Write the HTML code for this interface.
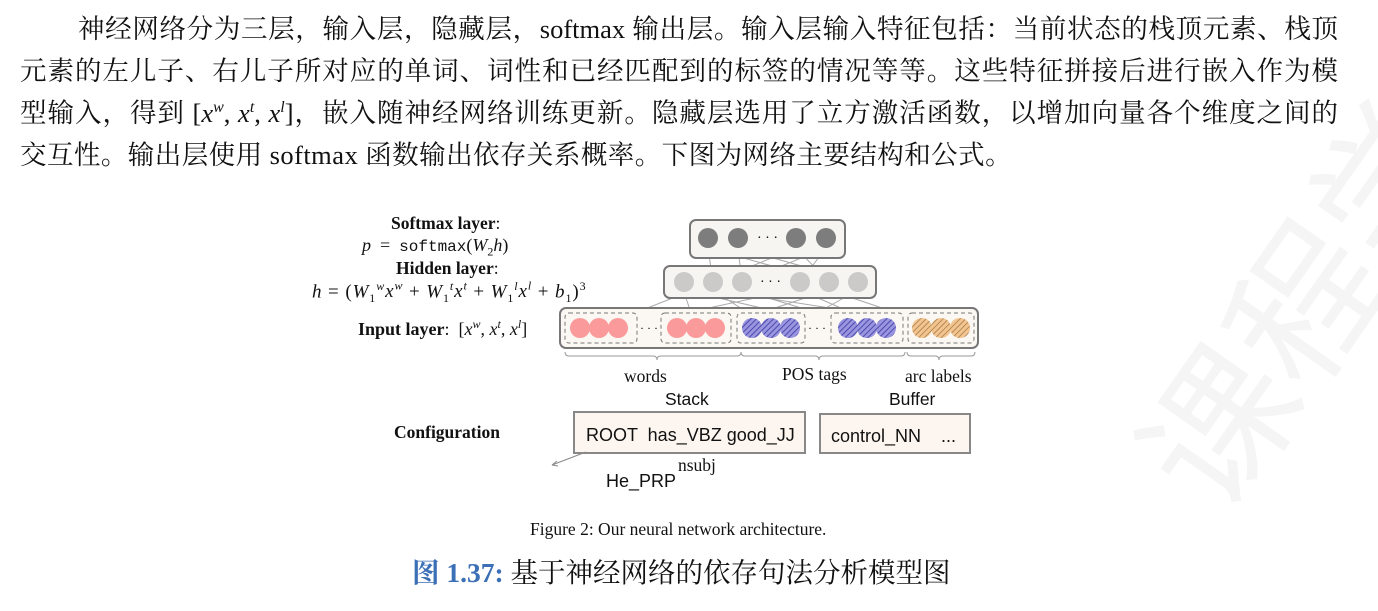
<!DOCTYPE html>
<html><head><meta charset="utf-8"><style>
body{margin:0;width:1378px;height:611px;background:#fff;position:relative;overflow:hidden;font-family:"Liberation Serif","Noto Serif CJK SC",serif;color:#111}
.l{position:absolute;font-size:26.5px;white-space:nowrap;text-align:justify;text-align-last:justify}
.a{position:absolute;white-space:nowrap}
.s{font-family:"Liberation Sans",sans-serif}
i{font-style:italic}
</style></head><body>
<div class="a" style="left:1080px;top:420px;font-size:150px;color:#f5f5f5;transform:rotate(-55deg);transform-origin:left top;font-family:'Noto Sans CJK SC',sans-serif">课程学习</div>
<div class="l" style="left:78px;top:7px;width:1260px">神经网络分为三层，输入层，隐藏层，softmax 输出层。输入层输入特征包括：当前状态的栈顶元素、栈顶</div>
<div class="l" style="left:20px;top:49px;width:1318px">元素的左儿子、右儿子所对应的单词、词性和已经匹配到的标签的情况等等。这些特征拼接后进行嵌入作为模</div>
<div class="l" style="left:20px;top:91px;width:1318px">型输入，得到 [<i>x<sup style="font-size:16px">w</sup></i>, <i>x<sup style="font-size:16px">t</sup></i>, <i>x<sup style="font-size:16px">l</sup></i>]，嵌入随神经网络训练更新。隐藏层选用了立方激活函数，以增加向量各个维度之间的</div>
<div class="a" style="left:20px;top:133px;font-size:26.5px;letter-spacing:0.45px">交互性。输出层使用 softmax 函数输出依存关系概率。下图为网络主要结构和公式。</div>

<div class="a" style="left:391px;top:213px;font-size:17.5px;font-weight:bold">Softmax layer<span style="font-weight:normal">:</span></div>
<div class="a" style="left:362px;top:235px;font-size:18px"><i>p</i> &nbsp;= &nbsp;<span style="font-family:'Liberation Mono',monospace;font-size:16px">softmax</span>(<i>W</i><sub style="font-size:12px">2</sub><i>h</i>)</div>
<div class="a" style="left:396px;top:258px;font-size:17.5px;font-weight:bold">Hidden layer<span style="font-weight:normal">:</span></div>
<div class="a" style="left:312px;top:279px;font-size:19px;letter-spacing:0.9px"><i>h</i> = (<i>W</i><sub style="font-size:12px">1</sub><sup style="font-size:12px"><i>w</i></sup><i>x<sup style="font-size:12px">w</sup></i> + <i>W</i><sub style="font-size:12px">1</sub><sup style="font-size:12px"><i>t</i></sup><i>x<sup style="font-size:12px">t</sup></i> + <i>W</i><sub style="font-size:12px">1</sub><sup style="font-size:12px"><i>l</i></sup><i>x<sup style="font-size:12px">l</sup></i> + <i>b</i><sub style="font-size:12px">1</sub>)<sup style="font-size:12px">3</sup></div>
<div class="a" style="left:358px;top:317px;font-size:18px"><b>Input layer</b>: &nbsp;[<i>x<sup style="font-size:12px">w</sup></i>, <i>x<sup style="font-size:12px">t</sup></i>, <i>x<sup style="font-size:12px">l</sup></i>]</div>

<svg class="a" style="left:0;top:0" width="1378" height="611">
<defs>
<pattern id="hb" width="4" height="4" patternUnits="userSpaceOnUse" patternTransform="rotate(45)"><rect width="4" height="4" fill="#9a95e0"/><line x1="0" y1="0" x2="0" y2="4" stroke="#333399" stroke-width="1.5"/></pattern>
<pattern id="ho" width="4" height="4" patternUnits="userSpaceOnUse" patternTransform="rotate(45)"><rect width="4" height="4" fill="#f3c48e"/><line x1="0" y1="0" x2="0" y2="4" stroke="#8a6a3a" stroke-width="1.2"/></pattern>
</defs>
<g stroke="#aaa" stroke-width="1" fill="none">
<path d="M713 282L708 248M742 282L738 248M829 282L796 248M800 282L826 248M713 282L796 248M829 282L708 248M742 282L826 248M858 282L738 248"/>
<path d="M597 328L713 282M616 328L829 282M696 328L684 292M715 328L829 290M771 328L713 290M790 328L858 290M867 328L742 290M886 328L800 290M941 328L829 290M960 328L713 290M848 328L684 290"/>
</g>
<rect x="690" y="220" width="155" height="38" rx="6" fill="#f7f5f2" stroke="#777" stroke-width="2"/>
<g fill="#7d7d7d"><circle cx="708" cy="238" r="10"/><circle cx="738" cy="238" r="10"/><circle cx="796" cy="238" r="10"/><circle cx="826" cy="238" r="10"/></g>
<text x="757" y="242" font-size="14">· · ·</text>
<rect x="664" y="266" width="212" height="32" rx="6" fill="#f7f5f2" stroke="#777" stroke-width="2"/>
<g fill="#cbcac8"><circle cx="684" cy="282" r="10"/><circle cx="713" cy="282" r="10"/><circle cx="742" cy="282" r="10"/><circle cx="800" cy="282" r="10"/><circle cx="829" cy="282" r="10"/><circle cx="858" cy="282" r="10"/></g>
<text x="760" y="286" font-size="14">· · ·</text>
<rect x="560" y="308" width="418" height="40" rx="6" fill="#fbf8f3" stroke="#777" stroke-width="2"/>
<g fill="none" stroke="#777" stroke-dasharray="4,3"><rect x="565" y="313" width="72" height="30" rx="4"/><rect x="661" y="313" width="70" height="30" rx="4"/><rect x="737" y="313" width="68" height="30" rx="4"/><rect x="831" y="313" width="72" height="30" rx="4"/><rect x="908" y="313" width="66" height="30" rx="4"/></g>
<g fill="#fb9a9a"><circle cx="580" cy="328" r="10"/><circle cx="599" cy="328" r="10"/><circle cx="618" cy="328" r="10"/><circle cx="677" cy="328" r="10"/><circle cx="696" cy="328" r="10"/><circle cx="715" cy="328" r="10"/></g>
<g fill="url(#hb)"><circle cx="752" cy="328" r="10"/><circle cx="771" cy="328" r="10"/><circle cx="790" cy="328" r="10"/><circle cx="848" cy="328" r="10"/><circle cx="867" cy="328" r="10"/><circle cx="886" cy="328" r="10"/></g>
<g fill="url(#ho)"><circle cx="922" cy="328" r="10"/><circle cx="941" cy="328" r="10"/><circle cx="960" cy="328" r="10"/></g>
<text x="640" y="332" font-size="12">· · ·</text><text x="808" y="332" font-size="12">· · ·</text>
<g fill="none" stroke="#999"><path d="M565 352q0 4 4 4h84q4 0 4 4q0-4 4-4h76q4 0 4-4"/><path d="M741 352q0 4 4 4h70q4 0 4 4q0-4 4-4h78q4 0 4-4"/><path d="M907 352q0 4 4 4h24q4 0 4 4q0-4 4-4h28q4 0 4-4"/></g>
<rect x="574" y="412" width="231" height="41" fill="#fdf6f0" stroke="#888" stroke-width="2"/>
<rect x="820" y="414" width="150" height="39" fill="#fdf6f0" stroke="#888" stroke-width="2"/>
<path d="M586 452L552 465" stroke="#888"/><path d="M552 465l5-4M552 465l6 1" stroke="#888"/>
</svg>
<div class="a" style="left:624px;top:366px;font-size:17.5px">words</div>
<div class="a" style="left:782px;top:364px;font-size:17.5px">POS tags</div>
<div class="a" style="left:905px;top:366px;font-size:17.5px">arc labels</div>
<div class="a s" style="left:665px;top:389px;font-size:17.5px">Stack</div>
<div class="a s" style="left:889px;top:389px;font-size:17.5px">Buffer</div>
<div class="a" style="left:394px;top:422px;font-size:17.5px;font-weight:bold">Configuration</div>
<div class="a s" style="left:586px;top:425px;font-size:18px">ROOT &nbsp;has_VBZ good_JJ</div>
<div class="a s" style="left:831px;top:426px;font-size:18px">control_NN &nbsp;&nbsp;&nbsp;...</div>
<div class="a" style="left:678px;top:455px;font-size:17.5px">nsubj</div>
<div class="a s" style="left:606px;top:471px;font-size:18px">He_PRP</div>
<div class="a" style="left:530px;top:519px;font-size:17.5px">Figure 2: Our neural network architecture.</div>
<div class="a" style="left:412px;top:550px;font-size:27.5px"><b style="color:#3b6fb6">图 1.37:</b> 基于神经网络的依存句法分析模型图</div>
</body></html>
